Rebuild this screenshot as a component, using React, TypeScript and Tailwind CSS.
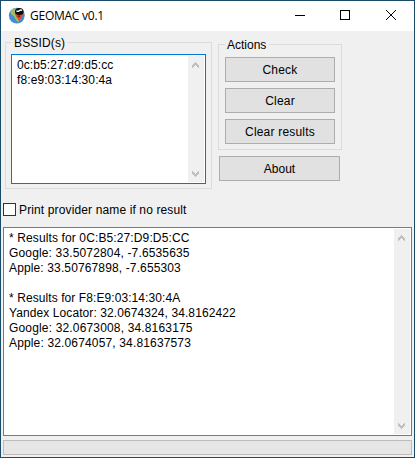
import type { ReactNode } from "react";

function Chevron({ up = false }: { up?: boolean }) {
  return (
    <svg width="7" height="6" viewBox="0 0 7 6" className={up ? "mr-px" : "mr-px rotate-180"} shapeRendering="crispEdges">
      <path d="M3 0h1v1h1v1h1v1h1v3h-1v-1h-1v-1h-1v-1h-1v1h-1v1h-1v1h-1v-3h1v-1h1v-1h1z" fill="#bfbfbf" />
    </svg>
  );
}

function ScrollBar() {
  return (
    <div className="flex w-[16px] shrink-0 flex-col items-center justify-between bg-[#f0f0f0] pt-[6px] pb-[5px]">
      <Chevron up />
      <Chevron />
    </div>
  );
}

function Button({ children, className = "" }: { children: ReactNode; className?: string }) {
  return (
    <button className={`block h-[25px] border border-[#adadad] bg-[#e1e1e1] text-center leading-[25px] ${className}`}>
      {children}
    </button>
  );
}

const results: [string, string][] = [
  ["* Results for 0C:B5:27:D9:D5:CC", "tracking-[0.12px]"],
  ["Google: 33.5072804, -7.6535635", "tracking-[0.15px]"],
  ["Apple: 33.50767898, -7.655303", "tracking-[0.13px]"],
  ["", ""],
  ["* Results for F8:E9:03:14:30:4A", "tracking-[0.08px]"],
  ["Yandex Locator: 32.0674324, 34.8162422", "tracking-[0.09px]"],
  ["Google: 32.0673008, 34.8163175", "tracking-[0.16px]"],
  ["Apple: 32.0674057, 34.81637573", "tracking-[0.15px]"],
];

export default function App() {
  return (
    <div className="flex h-[458px] w-[415px] flex-col overflow-hidden border border-[#1b4b6b] bg-[#f0f0f0] font-['Liberation_Sans',Arial,sans-serif] text-[12px] text-black">
      <header className="flex h-[30px] shrink-0 items-center bg-white">
        <svg className="ml-[7px] shrink-0" width="18" height="18" viewBox="0 0 18 18">
          <circle cx="8.8" cy="8.6" r="7.9" fill="#3f8fd2" />
          <path d="M2.6 3.8 Q5 1.2 8 .9 L9 4.6 L7.5 7.6 L11 12.6 L10.5 15.6 Q7.5 13.6 6.5 10.1 L3 7.1Z" fill="#a3bb62" />
          <path d="M6.8 5.6 H15.4 Q15 10.1 11 13.6 Q7.4 10.1 6.8 5.6Z" fill="#e8432a" />
          <ellipse cx="11.3" cy="4.4" rx="4.3" ry="3.5" fill="#0c0c0c" />
          <path d="M8.4 3.8 Q9.8 5 11.2 3.7 Q12.6 2.5 14.2 3.4" fill="none" stroke="#fff" strokeWidth="1.3" />
          <path d="M9.6 8.4 H12.4 L11 10.6Z" fill="#25201e" />
        </svg>
        <span className="ml-[4px] font-['Open_Sans','Noto_Sans',sans-serif] text-[12px] tracking-[-0.25px]">GEOMAC v0.1</span>
        <svg className="ml-auto shrink-0" width="120" height="30" viewBox="0 0 120 30" fill="none" stroke="#000" strokeWidth="1">
          <path d="M1 14.5 H11" />
          <rect x="46.5" y="9.5" width="9" height="9" />
          <path d="M92 9 L102 19 M102 9 L92 19" />
        </svg>
      </header>

      <main className="flex flex-1 flex-col pl-[2px]">
        <div className="flex h-[158px] items-start">
          <fieldset className="mt-[4px] ml-[2px] h-[154px] w-[207px] border border-[#dcdcdc] pl-[5px]">
            <legend className="ml-[1px] h-[15px] px-[2px] leading-[17px] tracking-[0.15px]">BSSID(s)</legend>
            <div className="mt-[4px] flex h-[130px] w-[195px] border border-[#0078d7] bg-white p-px">
              <div className="flex-1 pt-[2px] pl-[4px] leading-[15px]">
                <div className="tracking-[0.1px]">0c:b5:27:d9:d5:cc</div>
                <div className="tracking-[0.1px]">f8:e9:03:14:30:4a</div>
              </div>
              <ScrollBar />
            </div>
          </fieldset>
          <div className="ml-[6px] mt-[6px]">
            <fieldset className="h-[113px] w-[124px] border border-[#dcdcdc] pl-[6px]">
              <legend className="h-[15px] pr-[3px] pl-[2px] leading-[17px]">Actions</legend>
              <div className="flex w-[110px] flex-col gap-[6px] pt-[5px]">
                <Button className="tracking-[0.2px]">Check</Button>
                <Button className="tracking-[0.2px]">Clear</Button>
                <Button className="tracking-[0.2px]">Clear results</Button>
              </div>
            </fieldset>
            <Button className="mt-[6px] ml-px w-[121px]">About</Button>
          </div>
        </div>

        <label className="mt-[13px] flex h-[15px] items-center">
          <span className="size-[13px] border border-[#333] bg-white" />
          <span className="ml-[3px] pt-px leading-[15px] tracking-[0.13px]">Print provider name if no result</span>
        </label>

        <section className="mt-[10px] flex h-[209px] w-[409px] border border-[#7a7a7a] bg-white p-px">
          <div className="flex-1 pt-[2px] pl-[4px] leading-[15px]">
            {results.map(([line, tracking], i) => (
              <div key={i} className={`h-[15px] ${tracking}`}>{line}</div>
            ))}
          </div>
          <ScrollBar />
        </section>
        <div className="mt-[4px] h-[15px] w-[409px] border border-[#bcbcbc] bg-[#e6e6e6]" />
      </main>
    </div>
  );
}
